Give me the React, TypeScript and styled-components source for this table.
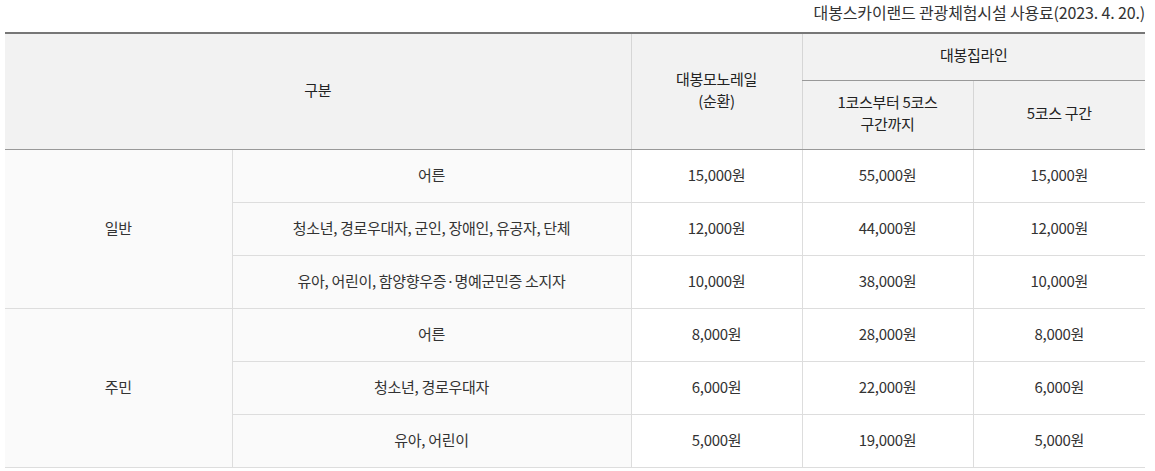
import React from "react";
import styled, { createGlobalStyle } from "styled-components";

const Global = createGlobalStyle`
  html, body { margin: 0; padding: 0; background: #fff; }
  body { font-family: "Noto Sans CJK KR", "Noto Sans", sans-serif; color: #333; }
`;

const Wrap = styled.div`
  padding: 0 10px 0 5px;
  width: 1140px;
`;

const Caption = styled.div`
  text-align: right;
  font-size: 16px;
  line-height: 20px;
  height: 20px;
  padding: 2px 0 10px;
  color: #333;
  letter-spacing: -0.15px;
`;

const Table = styled.table`
  width: 1140px;
  border-collapse: collapse;
  table-layout: fixed;
  border-top: 2px solid #777;
  border-bottom: 1px solid #ddd;
  font-size: 15px;
  letter-spacing: -0.3px;
`;

const Th = styled.th<{ $h?: number; $noLeft?: boolean }>`
  background: #f2f2f2;
  font-weight: 400;
  color: #222;
  height: ${(p) => (p.$h ? `${p.$h}px` : "auto")};
  padding: 0 0 4px;
  line-height: 22px;
  border-left: ${(p) => (p.$noLeft ? "none" : "1px solid #d6d6d6")};
  border-bottom: 1px solid #999;
  vertical-align: middle;
  text-align: center;
`;

const Td = styled.td<{ $shade?: boolean; $noLeft?: boolean }>`
  height: 48px;
  padding: 0 0 4px;
  text-align: center;
  vertical-align: middle;
  color: #333;
  background: ${(p) => (p.$shade ? "#fafafa" : "#fff")};
  border-left: ${(p) => (p.$noLeft ? "none" : "1px solid #ddd")};
  border-top: 1px solid #ddd;
`;

type Row = { label: string; a: string; b: string; c: string };

const groups: { name: string; rows: Row[] }[] = [
  {
    name: "일반",
    rows: [
      { label: "어른", a: "15,000원", b: "55,000원", c: "15,000원" },
      { label: "청소년, 경로우대자, 군인, 장애인, 유공자, 단체", a: "12,000원", b: "44,000원", c: "12,000원" },
      { label: "유아, 어린이, 함양향우증·명예군민증 소지자", a: "10,000원", b: "38,000원", c: "10,000원" },
    ],
  },
  {
    name: "주민",
    rows: [
      { label: "어른", a: "8,000원", b: "28,000원", c: "8,000원" },
      { label: "청소년, 경로우대자", a: "6,000원", b: "22,000원", c: "6,000원" },
      { label: "유아, 어린이", a: "5,000원", b: "19,000원", c: "5,000원" },
    ],
  },
];

export default function App() {
  return (
    <Wrap>
      <Global />
      <Caption>대봉스카이랜드 관광체험시설 사용료(2023. 4. 20.)</Caption>
      <Table>
        <colgroup>
          <col style={{ width: 227 }} />
          <col style={{ width: 399 }} />
          <col style={{ width: 171 }} />
          <col style={{ width: 171 }} />
          <col style={{ width: 172 }} />
        </colgroup>
        <thead>
          <tr>
            <Th colSpan={2} rowSpan={2} $noLeft>구분</Th>
            <Th rowSpan={2}>
              대봉모노레일
              <br />
              (순환)
            </Th>
            <Th colSpan={2} $h={42}>대봉집라인</Th>
          </tr>
          <tr>
            <Th $h={64}>
              1코스부터 5코스
              <br />
              구간까지
            </Th>
            <Th $h={64}>5코스 구간</Th>
          </tr>
        </thead>
        <tbody>
          {groups.map((g) =>
            g.rows.map((r, i) => (
              <tr key={g.name + i}>
                {i === 0 && (
                  <Td rowSpan={g.rows.length} $shade $noLeft>
                    {g.name}
                  </Td>
                )}
                <Td $shade>{r.label}</Td>
                <Td>{r.a}</Td>
                <Td>{r.b}</Td>
                <Td>{r.c}</Td>
              </tr>
            ))
          )}
        </tbody>
      </Table>
    </Wrap>
  );
}
